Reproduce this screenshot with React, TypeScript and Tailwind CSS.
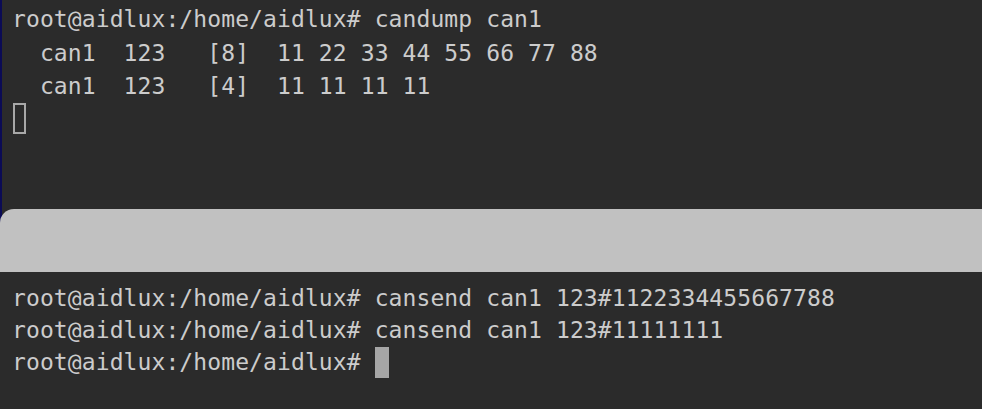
const topLines = [
  "root@aidlux:/home/aidlux# candump can1",
  "  can1  123   [8]  11 22 33 44 55 66 77 88",
  "  can1  123   [4]  11 11 11 11",
];

const bottomLines = [
  "root@aidlux:/home/aidlux# cansend can1 123#1122334455667788",
  "root@aidlux:/home/aidlux# cansend can1 123#11111111",
];

const mono = "font-['DejaVu_Sans_Mono','Liberation_Mono',monospace] text-[23px] tracking-[0.1px] text-[#cccccc] whitespace-pre";

export default function App() {
  return (
    <div className="flex h-[409px] w-[982px] flex-col overflow-hidden bg-[#2b2b2b]">
      <section className="h-[209px] border-l-2 border-[#0b0b55] pl-[10px] pt-[3px]">
        <div className={`${mono} leading-[33.5px]`}>
          {topLines.map((line, i) => (
            <div key={i}>{line}</div>
          ))}
          <div className="h-[33.5px]">
            <div className="mt-[-1px] ml-[1px] h-[31px] w-[13px] border-2 border-[#a8a8a8]" />
          </div>
        </div>
      </section>

      <div className="h-[63px] bg-[linear-gradient(to_right,#0b0b55_2px,#2b2b2b_2px)]">
        <div className="h-full rounded-tl-[14px] bg-[#c1c1c1]" />
      </div>

      <section className="flex-1 pl-[12px] pt-[10px]">
        <div className={`${mono} leading-[32px]`}>
          {bottomLines.map((line, i) => (
            <div key={i}>{line}</div>
          ))}
          <div className="flex items-center">
            <span>root@aidlux:/home/aidlux# </span>
            <span className="h-[31px] w-[14px] bg-[#a6a6a6]" />
          </div>
        </div>
      </section>
    </div>
  );
}
